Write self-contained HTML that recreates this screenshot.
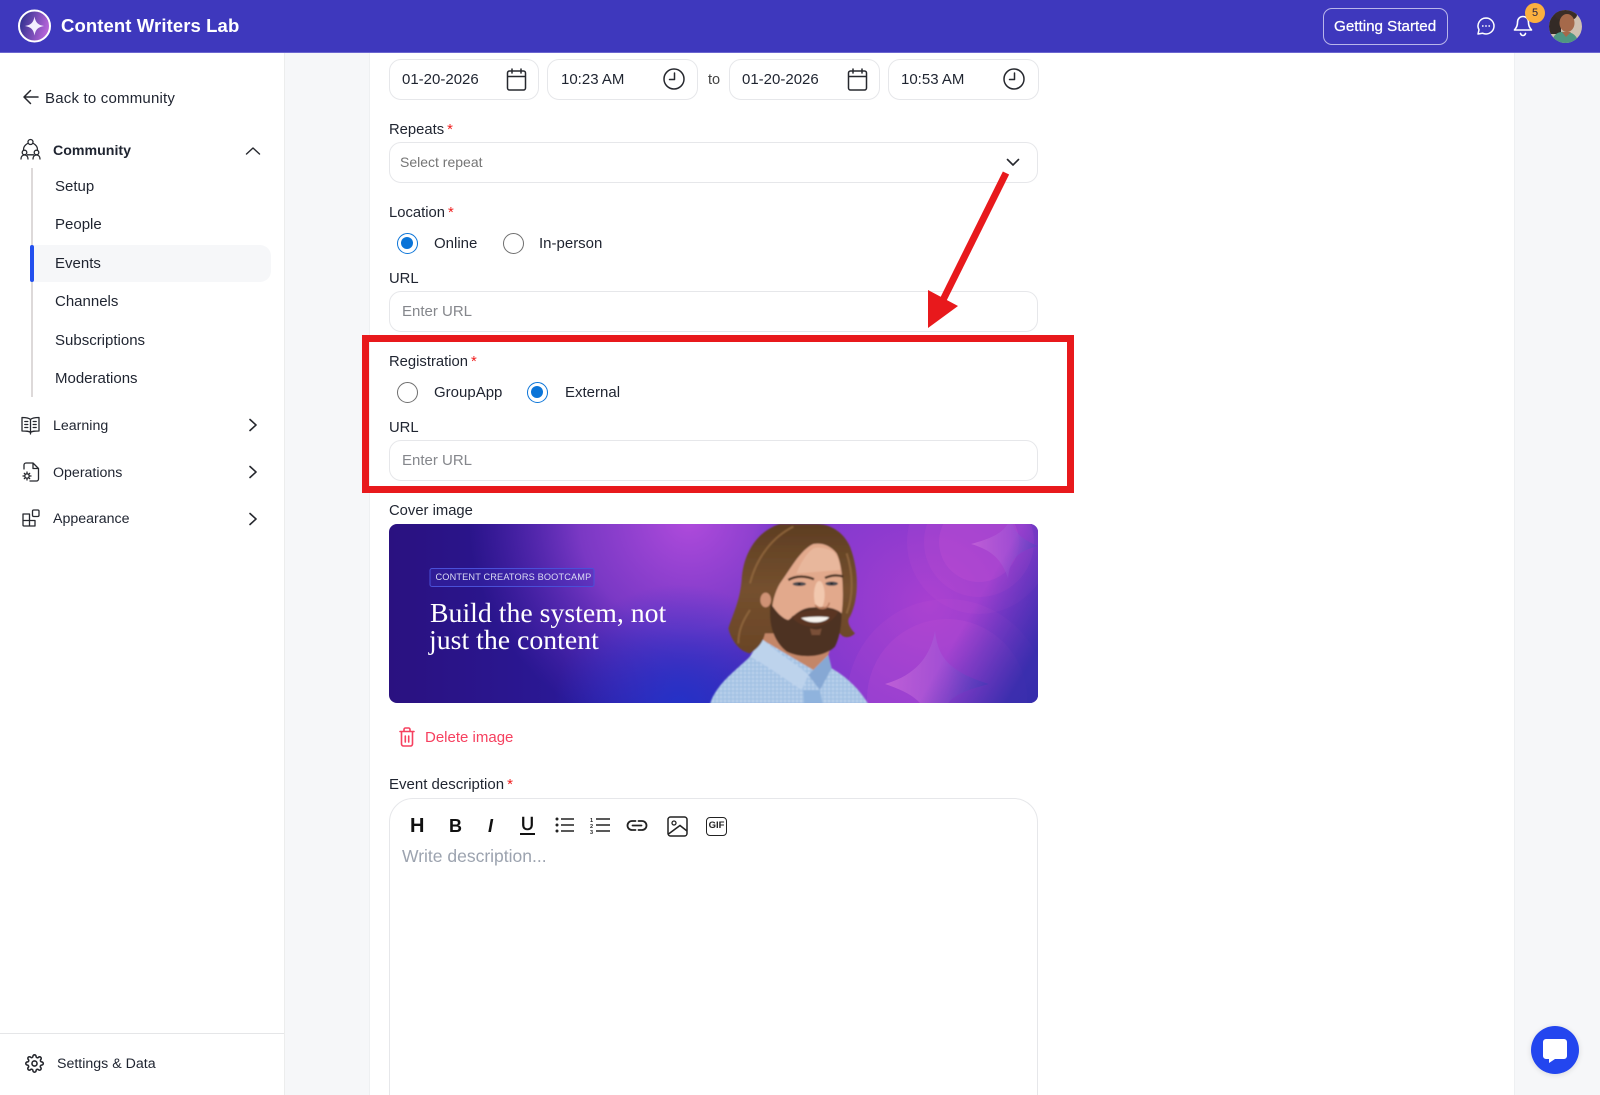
<!DOCTYPE html>
<html><head><meta charset="utf-8"><style>
html,body{margin:0;padding:0;width:1600px;height:1095px;overflow:hidden;background:#f6f7f9;font-family:"Liberation Sans",sans-serif;color:#1f2430}
#w{position:absolute;left:0;top:0;width:1600px;height:1095px;overflow:hidden;background:#f6f7f9}
.t{position:absolute;line-height:20px;height:20px;white-space:nowrap;font-size:14.800px}
.n{font-size:15px}
.box{position:absolute;background:#fff;border:1px solid #e6e7ea;box-sizing:border-box;border-radius:12px}
.a{position:absolute}
.req{color:#f01c1c;margin-left:3px}
svg{position:absolute;overflow:visible}
.ph{color:#85878c;font-size:15px}
.s{fill:none;stroke:#26282e;stroke-width:1.6;stroke-linecap:round;stroke-linejoin:round}
.r{position:absolute;width:21px;height:21px;border-radius:50%;box-sizing:border-box;border:1.5px solid #6e6e6e;background:#fff}
.r.on{border:1.5px solid #0a74d8}
.r.on:after{content:"";position:absolute;left:3px;top:3px;width:12px;height:12px;border-radius:50%;background:#0a74d8}
</style></head><body><div id="w">
<!-- panels -->
<div class="a" style="left:0;top:52px;width:284px;height:1043px;background:#fff;border-right:1px solid #eceded"></div>
<div class="a" style="left:369px;top:52px;width:1146px;height:1043px;background:#fff;border-left:1px solid #eef0f2;border-right:1px solid #eef0f2;box-sizing:border-box"></div>
<!-- header -->
<div class="a" style="left:0;top:0;width:1600px;height:53px;background:#3e38bd;border-bottom:1px solid #6b66d0;box-sizing:border-box"></div>
<svg style="left:0;top:0" width="70" height="53" viewBox="0 0 70 53">
<defs><linearGradient id="lg" x1="0" y1="0" x2="1" y2="0.3"><stop offset="0" stop-color="#1f2a86"/><stop offset="1" stop-color="#b464d8"/></linearGradient></defs>
<circle cx="34.500" cy="26" r="15.500" fill="url(#lg)" stroke="#fff" stroke-width="2"/>
<path d="M34.500 16.500C35.500 22.500 38 25 44 26C38 27 35.500 29.500 34.500 35.500C33.500 29.500 31 27 25 26C31 25 33.500 22.500 34.500 16.500Z" fill="#f4efff"/>
</svg>
<div class="t" style="left:61px;top:16px;color:#fff;font-weight:700;font-size:18.500px;letter-spacing:.1px">Content Writers Lab</div>
<div class="a" style="left:1323px;top:8px;width:125px;height:37px;border:1px solid #b9b6ea;border-radius:9px;box-sizing:border-box"></div>
<div class="t" style="left:1334px;top:17px;color:#fff;font-size:15.200px;-webkit-text-stroke:.25px #fff">Getting Started</div>
<svg style="left:1476px;top:16px" width="20" height="20" viewBox="0 0 20 20"><path d="M10 2a8 8 0 0 1 0 16c-1.300 0-2.500-.3-3.500-.8L2 18l1-4.200A8 8 0 0 1 10 2Z" fill="none" stroke="#fff" stroke-width="1.500" stroke-linejoin="round"/><circle cx="6.800" cy="10" r=".9" fill="#fff"/><circle cx="10" cy="10" r=".9" fill="#fff"/><circle cx="13.200" cy="10" r=".9" fill="#fff"/></svg>
<svg style="left:1513px;top:15px" width="20" height="22" viewBox="0 0 20 22"><path d="M10 1.500c-3.500 0-5.500 2.700-5.500 6 0 4.500-2 6-3 7.500h17c-1-1.500-3-3-3-7.500 0-3.300-2-6-5.500-6ZM7.500 18.500c.5 1.500 1.500 2 2.500 2s2-.5 2.500-2" fill="none" stroke="#fff" stroke-width="1.600" stroke-linejoin="round" stroke-linecap="round"/></svg>
<div class="a" style="left:1525px;top:3px;width:20px;height:20px;border-radius:50%;background:#fbb03f;font-size:11px;line-height:20px;text-align:center;color:#2a2440">5</div>
<svg style="left:1549px;top:10px" width="33" height="33" viewBox="0 0 33 33"><defs><clipPath id="av"><circle cx="16.500" cy="16.500" r="16.500"/></clipPath></defs><g clip-path="url(#av)"><rect width="33" height="33" fill="#cfc0b0"/><rect x="0" y="0" width="12" height="24" fill="#332a26"/><ellipse cx="17" cy="5" rx="11" ry="6" fill="#3a2d26"/><ellipse cx="18" cy="13" rx="7.500" ry="9" fill="#a5694a"/><path d="M3 33c1-9 6-12 14-11 7 0 11 4 13 11Z" fill="#4f9682"/><path d="M13 22l4 5 5-5Z" fill="#a5694a"/></g></svg>

<!-- sidebar -->
<svg style="left:22px;top:88px" width="18" height="18" viewBox="0 0 18 18"><path class="s" d="M16 9H2M8.500 2.500 2 9l6.500 6.500" style="stroke-width:1.500"/></svg>
<div class="t n" style="left:45px;top:89px;letter-spacing:.2px">Back to community</div>
<svg style="left:20px;top:138px" width="21" height="23" viewBox="0 0 21 23"><g class="s" style="stroke-width:1.300"><circle cx="10.500" cy="4" r="2.500"/><circle cx="4.500" cy="14.500" r="2.300"/><circle cx="16.500" cy="14.500" r="2.300"/><path d="M1 21c0-2.500 1.500-4 3.500-4S8 18.500 8 21M13 21c0-2.500 1.500-4 3.500-4s3.500 1.500 3.500 4M7.500 5.500C5 7 3.500 9.500 3.500 11.500M13.500 5.500c2.500 1.500 4 4 4 6M7.500 16.800h6"/></g></svg>
<div class="t" style="left:53px;top:141px;font-weight:700;font-size:14.200px">Community</div>
<svg style="left:245px;top:146px" width="16" height="10" viewBox="0 0 16 10"><path class="s" d="M1.500 8 8 2l6.500 6" style="stroke-width:1.400"/></svg>
<div class="a" style="left:31px;top:168px;width:2px;height:229px;background:#ddd9d9"></div>
<div class="a" style="left:32px;top:245px;width:239px;height:37px;background:#f6f7f9;border-radius:0 11px 11px 0"></div>
<div class="a" style="left:30px;top:245px;width:4px;height:37px;background:#2350ee;border-radius:2px"></div>
<div class="t n" style="left:55px;top:177px">Setup</div>
<div class="t n" style="left:55px;top:215px">People</div>
<div class="t n" style="left:55px;top:254px">Events</div>
<div class="t n" style="left:55px;top:292px">Channels</div>
<div class="t n" style="left:55px;top:331px">Subscriptions</div>
<div class="t n" style="left:55px;top:369px">Moderations</div>
<svg style="left:21px;top:416px" width="19" height="19" viewBox="0 0 19 19"><g class="s" style="stroke-width:1.300"><path d="M9.500 3.500C8 2 5 1.500 1 1.500V15c4 0 7 0 8.500 1.500C11 15 14 15 18 15V1.500c-4 0-7 .5-8.500 2ZM9.500 3.500v14.500M3.800 5.500h3M3.800 8.500h3M3.800 11.500h3M12.200 5.500h3M12.200 8.500h3M12.200 11.500h3"/></g></svg>
<div class="t" style="left:53px;top:416px;font-size:14.200px">Learning</div>
<svg style="left:248px;top:418px" width="10" height="14" viewBox="0 0 10 14"><path class="s" d="M2 1.500 8 7l-6 5.500" style="stroke-width:1.600"/></svg>
<svg style="left:22px;top:462px" width="18" height="20" viewBox="0 0 18 20"><g class="s" style="stroke-width:1.300"><path d="M2 7V3a2 2 0 0 1 2-2h7l5.500 5.500V17a2 2 0 0 1-2 2H8M11 1v5.500h5.500"/><circle cx="5" cy="14" r="2.200"/><path d="M5 10v1M5 17v1M1 14h1M8 14h1M2.300 11.300l.7.700M7 16l.7.700M2.300 16.700l.7-.7M7 12l.7-.7"/></g></svg>
<div class="t" style="left:53px;top:463px;font-size:14.200px">Operations</div>
<svg style="left:248px;top:465px" width="10" height="14" viewBox="0 0 10 14"><path class="s" d="M2 1.500 8 7l-6 5.500" style="stroke-width:1.600"/></svg>
<svg style="left:22px;top:509px" width="18" height="18" viewBox="0 0 18 18"><g class="s" style="stroke-width:1.300"><path d="M1 5h6.500v6.500H1zM1 11.500h6.500V17H2a1 1 0 0 1-1-1zM7.500 11.500H13V17H7.500z"/><rect x="10.500" y="1" width="6.500" height="6.500" rx="1.200"/></g></svg>
<div class="t" style="left:53px;top:509px;font-size:14.200px">Appearance</div>
<svg style="left:248px;top:512px" width="10" height="14" viewBox="0 0 10 14"><path class="s" d="M2 1.500 8 7l-6 5.500" style="stroke-width:1.600"/></svg>
<div class="a" style="left:0;top:1033px;width:284px;height:1px;background:#e5e6e8"></div>
<svg style="left:25px;top:1054px" width="19" height="19" viewBox="0 0 24 24"><g class="s" style="stroke-width:2"><circle cx="12" cy="12" r="3.200"/><path d="M19.400 15a1.700 1.700 0 0 0 .3 1.800l.1.100a2 2 0 1 1-2.900 2.900l-.1-.1a1.700 1.700 0 0 0-2.800 1.200V21a2 2 0 0 1-4 0v-.1a1.700 1.700 0 0 0-2.900-1.200l-.1.100a2 2 0 1 1-2.900-2.900l.1-.1a1.700 1.700 0 0 0-1.200-2.800H3a2 2 0 0 1 0-4h.1a1.700 1.700 0 0 0 1.200-2.900l-.1-.1a2 2 0 1 1 2.900-2.900l.1.100a1.700 1.700 0 0 0 2.800-1.200V3a2 2 0 0 1 4 0v.1a1.700 1.700 0 0 0 2.900 1.200l.1-.1a2 2 0 1 1 2.900 2.900l-.1.100a1.700 1.700 0 0 0 1.200 2.800h.1a2 2 0 0 1 0 4h-.1a1.700 1.700 0 0 0-1.500 1Z"/></g></svg>
<div class="t" style="left:57px;top:1054px;font-size:14.200px">Settings &amp; Data</div>

<!-- date row -->
<div class="box" style="left:389px;top:59px;width:150px;height:41px"></div>
<div class="box" style="left:547px;top:59px;width:151px;height:41px"></div>
<div class="box" style="left:729px;top:59px;width:151px;height:41px"></div>
<div class="box" style="left:888px;top:59px;width:151px;height:41px"></div>
<div class="t" style="left:402px;top:70px;font-size:15px">01-20-2026</div>
<div class="t" style="left:561px;top:70px;font-size:15px">10:23 AM</div>
<div class="t" style="left:708px;top:70px;font-size:14.500px;color:#444">to</div>
<div class="t" style="left:742px;top:70px;font-size:15px">01-20-2026</div>
<div class="t" style="left:901px;top:70px;font-size:15px">10:53 AM</div>
<svg style="left:506px;top:68px" width="21" height="23" viewBox="0 0 21 23"><path class="s" style="stroke-width:1.500" d="M3.500 3h14a2 2 0 0 1 2 2v15a2 2 0 0 1-2 2h-14a2 2 0 0 1-2-2V5a2 2 0 0 1 2-2ZM1.500 8.500h18M6 1v4M15 1v4"/></svg>
<svg style="left:847px;top:68px" width="21" height="23" viewBox="0 0 21 23"><path class="s" style="stroke-width:1.500" d="M3.500 3h14a2 2 0 0 1 2 2v15a2 2 0 0 1-2 2h-14a2 2 0 0 1-2-2V5a2 2 0 0 1 2-2ZM1.500 8.500h18M6 1v4M15 1v4"/></svg>
<svg style="left:663px;top:68px" width="22" height="22" viewBox="0 0 22 22"><circle class="s" style="stroke-width:1.500" cx="11" cy="11" r="10"/><path class="s" style="stroke-width:1.500" d="M11.500 5v6.500H6.500"/></svg>
<svg style="left:1003px;top:68px" width="22" height="22" viewBox="0 0 22 22"><circle class="s" style="stroke-width:1.500" cx="11" cy="11" r="10"/><path class="s" style="stroke-width:1.500" d="M11.500 5v6.500H6.500"/></svg>

<!-- repeats -->
<div class="t" style="left:389px;top:120px">Repeats<span class="req">*</span></div>
<div class="box" style="left:389px;top:142px;width:649px;height:41px"></div>
<div class="t" style="left:400px;top:152px;font-size:14px;color:#757575">Select repeat</div>
<svg style="left:1006px;top:158px" width="14" height="9" viewBox="0 0 14 9"><path class="s" style="stroke-width:1.600" d="M1.500 1.500 7 7l5.500-5.500"/></svg>

<!-- location -->
<div class="t" style="left:389px;top:203px">Location<span class="req">*</span></div>
<div class="r on" style="left:397px;top:233px"></div>
<div class="t n" style="left:434px;top:234px">Online</div>
<div class="r" style="left:503px;top:233px"></div>
<div class="t n" style="left:539px;top:234px">In-person</div>
<div class="t" style="left:389px;top:269px">URL</div>
<div class="box" style="left:389px;top:291px;width:649px;height:41px"></div>
<div class="t ph" style="left:402px;top:302px">Enter URL</div>

<!-- registration -->
<div class="t" style="left:389px;top:352px">Registration<span class="req">*</span></div>
<div class="r" style="left:397px;top:382px"></div>
<div class="t n" style="left:434px;top:383px">GroupApp</div>
<div class="r on" style="left:527px;top:382px"></div>
<div class="t n" style="left:565px;top:383px">External</div>
<div class="t" style="left:389px;top:418px">URL</div>
<div class="box" style="left:389px;top:440px;width:649px;height:41px"></div>
<div class="t ph" style="left:402px;top:451px">Enter URL</div>

<!-- annotation -->
<div class="a" style="left:362px;top:335px;width:712px;height:158px;border:7px solid #e8191c;box-sizing:border-box"></div>
<svg style="left:0;top:0" width="1600" height="1095"><path d="M1006 173 942 302" stroke="#e8191c" stroke-width="7" fill="none"/><path d="M928 290 958 306 928 328Z" fill="#e8191c"/></svg>

<!-- cover -->
<div class="t" style="left:389px;top:501px">Cover image</div>
<svg style="left:389px;top:524px" width="649" height="179" viewBox="0 0 649 179">
<defs>
<clipPath id="bc"><rect width="649" height="179" rx="8"/></clipPath>
<linearGradient id="b0" x1="0" y1="0" x2="1" y2="0"><stop offset="0" stop-color="#2a1180"/><stop offset=".4" stop-color="#2a1ca0"/><stop offset=".75" stop-color="#3a2ac0"/><stop offset="1" stop-color="#2f2aa8"/></linearGradient>
<radialGradient id="b1" gradientUnits="userSpaceOnUse" cx="300" cy="-5" r="220"><stop offset="0" stop-color="#b04bdc"/><stop offset=".5" stop-color="#8e40cf" stop-opacity=".8"/><stop offset="1" stop-color="#6a2cc0" stop-opacity="0"/></radialGradient>
<radialGradient id="b2" gradientUnits="userSpaceOnUse" cx="540" cy="80" r="190"><stop offset="0" stop-color="#a83fd0"/><stop offset=".65" stop-color="#8a3ad0" stop-opacity=".9"/><stop offset="1" stop-color="#5b30c5" stop-opacity="0"/></radialGradient>
<radialGradient id="b3" gradientUnits="userSpaceOnUse" cx="290" cy="185" r="125"><stop offset="0" stop-color="#2432c8"/><stop offset="1" stop-color="#2432c8" stop-opacity="0"/></radialGradient>
<linearGradient id="st" x1="0" y1="0" x2="1" y2="0"><stop offset="0" stop-color="#c566d8"/><stop offset=".6" stop-color="#a050d4"/><stop offset="1" stop-color="#6a48c8"/></linearGradient>
<linearGradient id="fade" x1="0" y1="0" x2="1" y2=".7"><stop offset=".6" stop-color="#2c2ba8" stop-opacity="0"/><stop offset="1" stop-color="#2c2ba8" stop-opacity=".85"/></linearGradient>
<linearGradient id="hr" x1="0" y1="0" x2="0" y2="1"><stop offset="0" stop-color="#5e3d22"/><stop offset=".5" stop-color="#74502e"/><stop offset="1" stop-color="#6a4426"/></linearGradient>
<pattern id="dot" width="12" height="12" patternUnits="userSpaceOnUse"><circle cx="3" cy="3" r="2.500" fill="#d9e6f5" opacity=".7"/><circle cx="9" cy="9" r="2.500" fill="#8fb0d8" opacity=".5"/></pattern>
<filter id="bl"><feGaussianBlur stdDeviation="2.200"/></filter>
</defs>
<g clip-path="url(#bc)">
<rect width="649" height="179" fill="url(#b0)"/>
<rect width="649" height="179" fill="url(#b1)"/>
<rect width="649" height="179" fill="url(#b2)"/>
<rect width="649" height="179" fill="url(#b3)"/>
<g fill="#c552d4">
<circle cx="590" cy="18" r="72" opacity=".14"/><circle cx="590" cy="18" r="55" opacity=".2"/><circle cx="590" cy="18" r="40" opacity=".28"/>
<circle cx="558" cy="175" r="100" opacity=".14"/><circle cx="558" cy="175" r="80" opacity=".22"/>
</g>
<path d="M546 107c3 25 12 40 54 53-30 8-42 14-46 30h-16c-6-14-18-22-42-30 28-8 45-25 50-53Z" fill="url(#st)" opacity=".8"/>
<path d="M622 -8c2 15 8 22 27 30-22 6-28 14-30 32-6-18-16-28-37-34 22-6 36-12 40-28Z" fill="url(#st)" opacity=".75"/>
<rect x="500" y="0" width="149" height="179" fill="url(#fade)"/>
<g transform="translate(311 -4) scale(.3333)" filter="url(#bl)">
<path d="M30 552C50 490 110 450 150 410L185 355 385 405 395 445C440 470 480 510 505 552Z" fill="#a9c6e6"/>
<path d="M30 552C50 490 110 450 150 410L185 355 385 405 395 445C440 470 480 510 505 552Z" fill="url(#dot)"/>
<path d="M195 330 180 355 340 450 385 405 405 340Z" fill="#c48668"/>
<path d="M185 355C230 400 290 430 325 465L305 510C260 480 190 430 150 410Z" fill="#bdd3ec"/>
<path d="M385 405 395 445 360 510 325 465Z" fill="#86a8d4"/>
<path d="M310 510 360 510 368 552 312 552Z" fill="#8fb3dd"/>
<path d="M240 12C180 30 130 90 125 180 120 240 100 280 85 325 95 365 120 395 150 400 175 385 190 365 195 340L420 340C430 355 450 355 465 340 445 320 440 300 450 290 475 240 480 160 450 80 430 35 390 12 350 12Z" fill="url(#hr)"/>
<path d="M280 20C220 50 170 110 150 190M150 270C130 300 115 330 115 370M440 100C460 160 460 230 440 280" fill="none" stroke="#94693e" stroke-width="6" opacity=".8"/>
<ellipse cx="197" cy="240" rx="16" ry="22" fill="#cf9274"/>
<path d="M340 72C300 90 270 150 240 190 225 215 215 250 215 290 220 340 260 400 330 400 390 395 420 340 425 280 432 230 430 140 410 100 390 75 365 68 340 72Z" fill="#e2a98c"/>
<path d="M340 85C320 100 300 130 290 160L420 150C420 125 410 105 400 95 380 85 360 80 340 85Z" fill="#e8b79c"/>
<ellipse cx="358" cy="225" rx="16" ry="42" fill="#f2c8ae"/>
<path d="M212 250C205 300 215 360 260 395 300 415 370 415 405 380 420 350 425 310 425 280 410 265 380 258 340 262 300 262 280 290 265 300 245 295 225 270 212 250Z" fill="#4d3322"/>
<path d="M275 290C310 268 380 262 415 275 400 305 365 322 330 320 305 317 285 305 275 290Z" fill="#5a3524"/>
<path d="M303 294C330 289 365 289 388 292 370 311 330 313 303 294Z" fill="#f8f4ef"/>
<path d="M330 325C345 330 355 330 365 325L360 345 335 345Z" fill="#7a5038"/>
<ellipse cx="298" cy="192" rx="20" ry="6" fill="#4a4a50"/>
<ellipse cx="395" cy="191" rx="19" ry="6" fill="#4a4a50"/>
<circle cx="298" cy="192" r="4" fill="#1e2226"/>
<circle cx="395" cy="191" r="4" fill="#1e2226"/>
<path d="M265 180C290 165 320 168 342 178M375 174C395 165 415 165 430 170" fill="none" stroke="#4a3020" stroke-width="7"/>
<path d="M345 255C360 270 385 268 388 248" fill="none" stroke="#bb7e60" stroke-width="5"/>
</g>
</g>
<rect x="41" y="44.500" width="164" height="18" rx="2" fill="#3a2fb8" fill-opacity=".35" stroke="#4a50d8"/>
<text x="46.500" y="56" font-family="Liberation Sans" font-size="9.200" fill="#dcdcf4" letter-spacing=".15">CONTENT CREATORS BOOTCAMP</text>
<text x="41" y="98" font-family="Liberation Serif" font-size="27.800" fill="#fff">Build the system, not</text>
<text x="40" y="125" font-family="Liberation Serif" font-size="27.800" fill="#fff">just the content</text>
</svg>

<!-- delete -->
<svg style="left:399px;top:727px" width="16" height="20" viewBox="0 0 16 20"><path d="M1 4.500h14M5 4.500V2.500a1.500 1.500 0 0 1 1.500-1.500h3A1.500 1.500 0 0 1 11 2.500v2M2.500 4.500V17a2 2 0 0 0 2 2h7a2 2 0 0 0 2-2V4.500M6.300 9v6M9.700 9v6" fill="none" stroke="#f6405f" stroke-width="1.600" stroke-linecap="round" stroke-linejoin="round"/></svg>
<div class="t n" style="left:425px;top:728px;color:#f6405f">Delete image</div>

<!-- editor -->
<div class="t n" style="left:389px;top:775px">Event description<span class="req">*</span></div>
<div class="box" style="left:389px;top:798px;width:649px;height:320px;border-radius:24px"></div>
<div class="t" style="left:410px;top:815px;font-size:20px;font-weight:700;color:#111;line-height:22px">H</div>
<div class="t" style="left:449px;top:815px;font-size:18px;font-weight:700;color:#111;line-height:22px">B</div>
<div class="t" style="left:488px;top:815px;font-size:18px;font-weight:700;font-style:italic;color:#111;line-height:22px">I</div>
<div class="t" style="left:521px;top:813px;font-size:18px;color:#111;line-height:22px;-webkit-text-stroke:.5px #111">U</div>
<div class="a" style="left:520px;top:833px;width:15px;height:2px;background:#111"></div>
<svg style="left:555px;top:817px" width="20" height="16" viewBox="0 0 20 16"><path d="M6 2h13M6 8h13M6 14h13" stroke="#222" stroke-width="1.600"/><circle cx="2" cy="2" r="1.500" fill="#222"/><circle cx="2" cy="8" r="1.500" fill="#222"/><circle cx="2" cy="14" r="1.500" fill="#222"/></svg>
<svg style="left:590px;top:817px" width="20" height="17" viewBox="0 0 20 17"><path d="M6 2h14M6 8h14M6 14h14" stroke="#222" stroke-width="1.600"/><text x="0" y="5" font-size="5.500" font-family="Liberation Sans" font-weight="700" fill="#222">1</text><text x="0" y="11" font-size="5.500" font-family="Liberation Sans" font-weight="700" fill="#222">2</text><text x="0" y="17" font-size="5.500" font-family="Liberation Sans" font-weight="700" fill="#222">3</text></svg>
<svg style="left:627px;top:819px" width="20" height="13" viewBox="0 0 20 13"><path d="M8.500 2H5a4.500 4.500 0 0 0 0 9h3.500M11.500 2H15a4.500 4.500 0 0 1 0 9h-3.500M5.500 6.500h9" fill="none" stroke="#222" stroke-width="1.800" stroke-linecap="round"/></svg>
<svg style="left:667px;top:816px" width="21" height="21" viewBox="0 0 21 21"><rect x="1" y="1" width="19" height="19" rx="2.500" fill="none" stroke="#222" stroke-width="1.500"/><circle cx="7" cy="7" r="2" fill="none" stroke="#222" stroke-width="1.300"/><path d="M1.500 18 13 9.500 20 15" fill="none" stroke="#222" stroke-width="1.500"/></svg>
<div class="a" style="left:706px;top:817px;width:21px;height:19px;border:1.500px solid #222;border-radius:4px;box-sizing:border-box;font-size:9.500px;font-weight:700;line-height:16px;text-align:center;color:#222">GIF</div>
<div class="t" style="left:402px;top:846px;font-size:17.500px;color:#9ca3af">Write description...</div>

<!-- chat -->
<div class="a" style="left:1531px;top:1026px;width:48px;height:48px;border-radius:50%;background:#2346ef;box-shadow:0 1px 6px rgba(0,0,0,.12)"></div>
<svg style="left:1543px;top:1039px" width="24" height="24" viewBox="0 0 24 24"><path d="M3 0h18a3 3 0 0 1 3 3v14a3 3 0 0 1-3 3H12l-6 4v-4H3a3 3 0 0 1-3-3V3a3 3 0 0 1 3-3Z" fill="#fff"/></svg>
</div></body></html>
